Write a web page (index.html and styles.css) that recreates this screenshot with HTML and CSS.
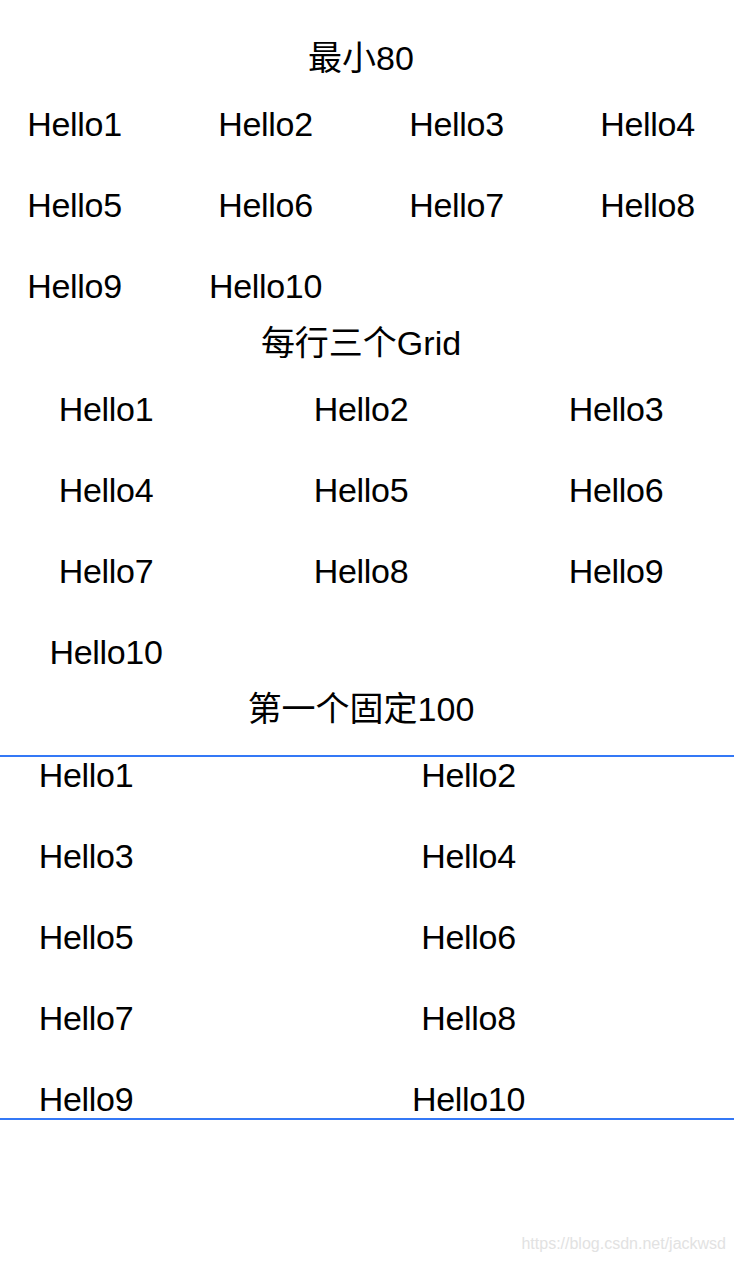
FILE: index.html
```html
<!DOCTYPE html>
<html lang="zh-CN">
<head>
    <meta charset="UTF-8">
    <meta name="viewport" content="width=device-width, initial-scale=1.0">
    <title>LazyVGrid</title>
    <link rel="stylesheet" href="styles.css">
</head>
<body>
    <div id="page">
        <div class="section">
            <p class="title">最小80</p>
            <div class="grid" id="grid-min">
                <p class="cell">Hello1</p>
                <p class="cell">Hello2</p>
                <p class="cell">Hello3</p>
                <p class="cell">Hello4</p>
                <p class="cell">Hello5</p>
                <p class="cell">Hello6</p>
                <p class="cell">Hello7</p>
                <p class="cell">Hello8</p>
                <p class="cell">Hello9</p>
                <p class="cell">Hello10</p>
            </div>
        </div>
        <div class="section">
            <p class="title">每行三个Grid</p>
            <div class="grid" id="grid-three">
                <p class="cell">Hello1</p>
                <p class="cell">Hello2</p>
                <p class="cell">Hello3</p>
                <p class="cell">Hello4</p>
                <p class="cell">Hello5</p>
                <p class="cell">Hello6</p>
                <p class="cell">Hello7</p>
                <p class="cell">Hello8</p>
                <p class="cell">Hello9</p>
                <p class="cell">Hello10</p>
            </div>
        </div>
        <div class="section">
            <p class="title">第一个固定100</p>
            <div class="grid" id="grid-fixed">
                <p class="cell">Hello1</p>
                <p class="cell">Hello2</p>
                <p class="cell">Hello3</p>
                <p class="cell">Hello4</p>
                <p class="cell">Hello5</p>
                <p class="cell">Hello6</p>
                <p class="cell">Hello7</p>
                <p class="cell">Hello8</p>
                <p class="cell">Hello9</p>
                <p class="cell">Hello10</p>
            </div>
        </div>
    </div>
    <p id="watermark">https://blog.csdn.net/jackwsd</p>
</body>
</html>
```

FILE: styles.css
```css
*{
    margin: 0;
    padding: 0;
}
body{
    width: 734px;
    height: 1262px;
    background: white;
    color: black;
    font-family: "Liberation Sans", "Noto Sans CJK SC", sans-serif;
    position: relative;
    overflow: hidden;
}
#page{
    width: 722px;
    padding-top: 38px;
    display: flex;
    flex-direction: column;
    gap: 16px;
}
.section{
    display: flex;
    flex-direction: column;
    gap: 25px;
}
.title{
    font-size: 34px;
    line-height: 41px;
    text-align: center;
}
.grid{
    display: grid;
    row-gap: 40px;
    justify-items: center;
}
.cell{
    font-size: 34px;
    line-height: 41px;
    letter-spacing: -0.3px;
}
#grid-min{
    grid-template-columns: repeat(4, 149px);
    column-gap: 42px;
}
#grid-three{
    grid-template-columns: repeat(3, 212px);
    column-gap: 43px;
}
#grid-fixed{
    width: 734px;
    grid-template-columns: 172px 507px;
    column-gap: 43px;
    box-shadow: inset 0 2px 0 #3478f6, inset 0 -2px 0 #3478f6;
}
#watermark{
    position: absolute;
    right: 8px;
    bottom: 9px;
    font-size: 16px;
    color: #e2e2e2;
}
```
